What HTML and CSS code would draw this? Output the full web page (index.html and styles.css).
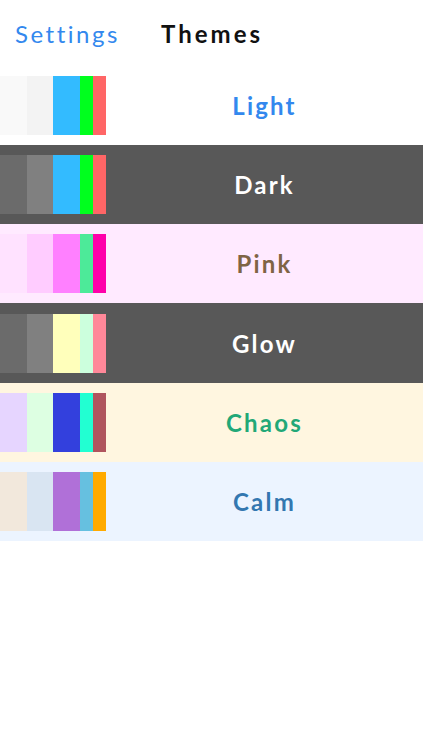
FILE: index.html
```html
<!doctype html>
<html>
    <head>
        <title>Themes</title>
        <link rel="stylesheet" href="styles.css">
    </head>
    <body>
        <div id="header">
            <span class="back">Settings</span>
            <span class="title">Themes</span>
        </div>
        <ul id="themes">
            <li class="theme light">
                <div class="swatch">
                    <i style="background:#f9f9f9"></i><i style="background:#f3f3f3"></i><i style="background:#33bbff"></i><i class="thin" style="background:#00ff1e"></i><i class="thin" style="background:#ff6666"></i>
                </div>
                <span>Light</span>
            </li>
            <li class="theme dark">
                <div class="swatch">
                    <i style="background:#6b6b6b"></i><i style="background:#808080"></i><i style="background:#33bbff"></i><i class="thin" style="background:#00ff1e"></i><i class="thin" style="background:#ff6666"></i>
                </div>
                <span>Dark</span>
            </li>
            <li class="theme pink">
                <div class="swatch">
                    <i style="background:#ffe2ff"></i><i style="background:#ffccff"></i><i style="background:#ff80ff"></i><i class="thin" style="background:#4dea99"></i><i class="thin" style="background:#ff00aa"></i>
                </div>
                <span>Pink</span>
            </li>
            <li class="theme glow">
                <div class="swatch">
                    <i style="background:#6b6b6b"></i><i style="background:#808080"></i><i style="background:#ffffbb"></i><i class="thin" style="background:#ccffdd"></i><i class="thin" style="background:#ff8899"></i>
                </div>
                <span>Glow</span>
            </li>
            <li class="theme chaos">
                <div class="swatch">
                    <i style="background:#e6d5ff"></i><i style="background:#ddffe2"></i><i style="background:#3340dd"></i><i class="thin" style="background:#22ffd2"></i><i class="thin" style="background:#b0555e"></i>
                </div>
                <span>Chaos</span>
            </li>
            <li class="theme calm">
                <div class="swatch">
                    <i style="background:#f2e8dc"></i><i style="background:#d9e5f2"></i><i style="background:#b070d8"></i><i class="thin" style="background:#66c0e0"></i><i class="thin" style="background:#ffaa00"></i>
                </div>
                <span>Calm</span>
            </li>
        </ul>
    </body>
</html>
```

FILE: styles.css
```css
* { margin: 0; padding: 0; box-sizing: border-box; }

body {
    background: #ffffff;
    font-family: 'Lato', 'DejaVu Sans', sans-serif;
}

#header {
    height: 66px;
    display: flex;
    align-items: center;
    padding: 0 0 0 15px;
    font-size: 24px;
}

#header .back {
    color: #3388ee;
    width: 146px;
    letter-spacing: 2.5px;
}

#header .title {
    color: #111111;
    font-weight: bold;
    letter-spacing: 3px;
}

#themes {
    list-style: none;
}

.theme {
    height: 79.17px;
    display: flex;
    align-items: center;
}

.swatch {
    display: flex;
    width: 106px;
    height: 59px;
    flex-shrink: 0;
}

.swatch i {
    display: block;
    width: 26.6px;
    height: 100%;
}

.swatch i.thin {
    width: 13.3px;
}

.theme span {
    flex: 1;
    text-align: center;
    font-size: 24px;
    font-weight: bold;
    letter-spacing: 2.2px;
}

.light { background: #ffffff; }
.light span { color: #3388ee; }

.dark { background: #585858; }
.dark span { color: #ffffff; }

.pink { background: #ffeaff; }
.pink span { color: #7f6445; }

.glow { background: #585858; }
.glow span { color: #ffffff; }

.chaos { background: #fff6e0; }
.chaos span { color: #22a877; }

.calm { background: #ecf4ff; }
.calm span { color: #3377b0; }
```
